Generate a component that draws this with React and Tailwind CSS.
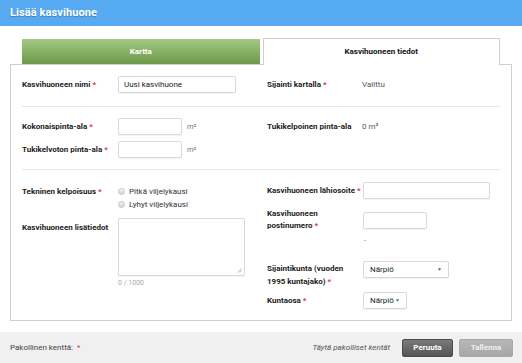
import React from 'react';

const Req = () => <span className="text-[#e53935] ml-[2px]">*</span>;

const Input = ({ w, value = '' }) => (
  <div
    className={`${w} h-[17px] border border-[#d9d9d9] rounded-[2px] bg-white shadow-[0_1px_1px_rgba(0,0,0,0.05)] flex items-center px-[5px] text-[8px] text-[#222]`}
  >
    {value}
  </div>
);

const Select = ({ w, value }) => (
  <div
    className={`${w} h-[17px] border border-[#d9d9d9] rounded-[2px] bg-white shadow-[0_1px_1px_rgba(0,0,0,0.06)] flex items-center justify-between pl-[6px] pr-[6px] text-[8px] text-[#222]`}
  >
    <span>{value}</span>
    <span className="text-[5px] text-[#666]">▼</span>
  </div>
);

const Radio = ({ label }) => (
  <div className="h-[13px] flex items-center gap-[4px]">
    <span className="w-[7px] h-[7px] rounded-full border border-[#c4c4c4] bg-gradient-to-b from-[#f4f4f4] to-[#d4d4d4]" />
    <span className="text-[8px] text-[#333]">{label}</span>
  </div>
);

export default function App() {
  return (
    <div className="w-[522px] h-[363px] flex flex-col bg-white font-['Roboto',sans-serif] overflow-hidden">
      {/* header */}
      <div className="h-[26px] bg-[#55aaf1] flex items-center px-[10px]">
        <h1 className="text-white font-bold text-[11px] tracking-[0.1px] [text-shadow:0_1px_1px_rgba(0,0,0,0.25)]">
          Lisää kasvihuone
        </h1>
      </div>

      <div className="px-[10px] pt-[12px]">
        {/* tabs */}
        <div className="flex items-end gap-[3px] px-[12px] h-[26px]">
          <div className="w-[238px] h-[25px] bg-gradient-to-b from-[#a5c982] to-[#6c984a] flex items-center justify-center text-white text-[8px] font-bold">
            Kartta
          </div>
          <div className="relative z-10 w-[238px] h-[27px] -mb-px bg-white border border-b-0 border-[#cfcfcf] flex items-center justify-center text-[#111] text-[8px] font-bold">
            Kasvihuoneen tiedot
          </div>
        </div>

        {/* panel */}
        <div className="border border-[#cfcfcf] px-[11px] text-[8px]">
          {/* section 1 */}
          <div className="flex pt-[11px] pb-[13px] border-b border-[#e6e6e6]">
            <div className="w-[239px] flex items-center">
              <div className="w-[96px] font-bold text-[#222]">
                Kasvihuoneen nimi<Req />
              </div>
              <Input w="w-[118px]" value="Uusi kasvihuone" />
            </div>
            <div className="w-[239px] flex items-center pl-[6px]">
              <div className="w-[95px] font-bold text-[#222]">
                Sijainti kartalla<Req />
              </div>
              <span className="text-[#555]">Valittu</span>
            </div>
          </div>

          {/* section 2 */}
          <div className="flex pt-[11px] pb-[11px] border-b border-[#e6e6e6]">
            <div className="w-[239px] flex flex-col gap-[6px]">
              <div className="flex items-center">
                <div className="w-[96px] font-bold text-[#222]">
                  Kokonaispinta-ala<Req />
                </div>
                <Input w="w-[64px]" />
                <span className="ml-[5px] text-[#777] text-[7.5px]">m²</span>
              </div>
              <div className="flex items-center">
                <div className="w-[96px] font-bold text-[#222]">
                  Tukikelvoton pinta-ala<Req />
                </div>
                <Input w="w-[64px]" />
                <span className="ml-[5px] text-[#777] text-[7.5px]">m²</span>
              </div>
            </div>
            <div className="w-[239px] pl-[6px]">
              <div className="h-[17px] flex items-center">
                <div className="w-[95px] font-bold text-[#222]">Tukikelpoinen pinta-ala</div>
                <span className="text-[#555]">0 m²</span>
              </div>
            </div>
          </div>

          {/* section 3 */}
          <div className="flex pt-[12px] pb-[11px]">
            <div className="w-[239px] flex flex-col">
              <div className="flex pt-[3px]">
                <div className="w-[96px] h-[13px] flex items-center font-bold text-[#222]">
                  Tekninen kelpoisuus<Req />
                </div>
                <div className="flex flex-col">
                  <Radio label="Pitkä viljelykausi" />
                  <Radio label="Lyhyt viljelykausi" />
                </div>
              </div>
              <div className="flex mt-[7px]">
                <div className="w-[96px] pt-[4px] leading-[12px] font-bold text-[#222]">
                  Kasvihuoneen lisätiedot
                </div>
                <div className="flex flex-col">
                  <div className="relative w-[127px] h-[58px] border border-[#d9d9d9] rounded-[2px] bg-white shadow-[0_1px_1px_rgba(0,0,0,0.05)]">
                    <svg className="absolute right-[2px] bottom-[2px]" width="5" height="5" viewBox="0 0 5 5">
                      <path d="M4.5 0.5 L0.5 4.5 M4.5 2.5 L2.5 4.5" stroke="#aaa" strokeWidth="0.8" />
                    </svg>
                  </div>
                  <span className="mt-[2px] text-[7px] text-[#aaa]">0 / 1000</span>
                </div>
              </div>
            </div>

            <div className="w-[239px] pl-[6px] flex flex-col">
              <div className="flex items-center">
                <div className="w-[96px] font-bold text-[#222]">
                  Kasvihuoneen lähiosoite<Req />
                </div>
                <Input w="w-[127px]" />
              </div>
              <div className="flex items-center mt-[9px]">
                <div className="w-[96px] leading-[12px] font-bold text-[#222]">
                  Kasvihuoneen
                  <br />
                  postinumero<Req />
                </div>
                <Input w="w-[64px]" />
              </div>
              <div className="ml-[97px] mt-[4px] text-[7px] text-[#777] leading-[10px]">-</div>
              <div className="flex items-start mt-[15px]">
                <div className="w-[96px] pt-[1px] leading-[13px] font-bold text-[#222]">
                  Sijaintikunta (vuoden
                  <br />
                  1995 kuntajako)<Req />
                </div>
                <Select w="w-[86px]" value="Närpiö" />
              </div>
              <div className="flex items-center mt-[4px]">
                <div className="w-[96px] font-bold text-[#222]">
                  Kuntaosa<Req />
                </div>
                <Select w="w-[44px]" value="Närpiö" />
              </div>
            </div>
          </div>
        </div>
      </div>

      {/* footer */}
      <div className="mt-auto h-[31px] bg-[#f0f0f0] flex items-center pl-[10px] pr-[9px] text-[8px]">
        <span className="text-[#444]">
          Pakollinen kenttä:<span className="text-[#e53935] ml-[4px]">*</span>
        </span>
        <span className="ml-auto italic text-[#555]">Täytä pakolliset kentät</span>
        <button className="ml-[12px] w-[51px] h-[18px] rounded-[2px] border border-[#4a4a4a] bg-gradient-to-b from-[#7a7a7a] to-[#555] text-white font-bold text-[8px]">
          Peruuta
        </button>
        <button className="ml-[6px] w-[54px] h-[18px] rounded-[2px] border border-[#a8a8a8] bg-gradient-to-b from-[#b8b8b8] to-[#a6a6a6] text-[#f0f0f0] font-bold text-[8px]">
          Tallenna
        </button>
      </div>
    </div>
  );
}
